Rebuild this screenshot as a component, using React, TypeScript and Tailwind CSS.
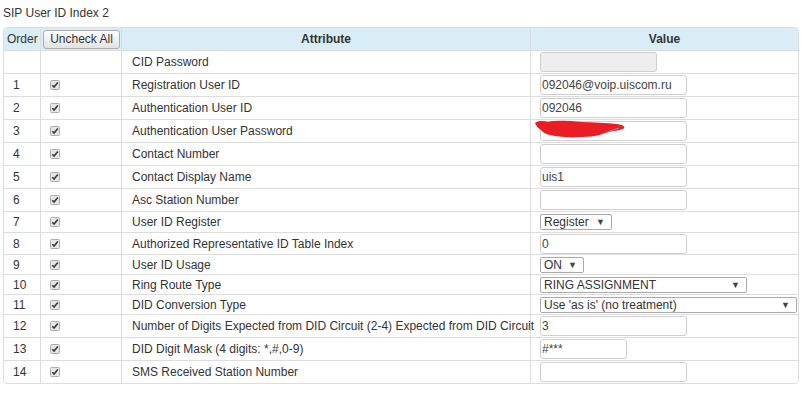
type Value =
  | { kind: "input"; text: string; w: number; disabled?: boolean; redacted?: boolean }
  | { kind: "select"; text: string; w: number };

interface Row {
  order: string;
  checked: boolean;
  label: string;
  h: string;
  value: Value;
}

const rows: Row[] = [
  { order: "", checked: false, label: "CID Password", h: "h-[23px]", value: { kind: "input", text: "", w: 117, disabled: true } },
  { order: "1", checked: true, label: "Registration User ID", h: "h-[23px]", value: { kind: "input", text: "092046@voip.uiscom.ru", w: 147 } },
  { order: "2", checked: true, label: "Authentication User ID", h: "h-[23px]", value: { kind: "input", text: "092046", w: 147 } },
  { order: "3", checked: true, label: "Authentication User Password", h: "h-[23px]", value: { kind: "input", text: "", w: 147, redacted: true } },
  { order: "4", checked: true, label: "Contact Number", h: "h-[23px]", value: { kind: "input", text: "", w: 147 } },
  { order: "5", checked: true, label: "Contact Display Name", h: "h-[23px]", value: { kind: "input", text: "uis1", w: 147 } },
  { order: "6", checked: true, label: "Asc Station Number", h: "h-[23px]", value: { kind: "input", text: "", w: 147 } },
  { order: "7", checked: true, label: "User ID Register", h: "h-[21px]", value: { kind: "select", text: "Register", w: 72 } },
  { order: "8", checked: true, label: "Authorized Representative ID Table Index", h: "h-[22px]", value: { kind: "input", text: "0", w: 147 } },
  { order: "9", checked: true, label: "User ID Usage", h: "h-[20px]", value: { kind: "select", text: "ON", w: 44 } },
  { order: "10", checked: true, label: "Ring Route Type", h: "h-[20px]", value: { kind: "select", text: "RING ASSIGNMENT", w: 207 } },
  { order: "11", checked: true, label: "DID Conversion Type", h: "h-[20px]", value: { kind: "select", text: "Use 'as is' (no treatment)", w: 257 } },
  { order: "12", checked: true, label: "Number of Digits Expected from DID Circuit (2-4) Expected from DID Circuit", h: "h-[23px]", value: { kind: "input", text: "3", w: 147 } },
  { order: "13", checked: true, label: "DID Digit Mask (4 digits: *,#,0-9)", h: "h-[23px]", value: { kind: "input", text: "#***", w: 87 } },
  { order: "14", checked: true, label: "SMS Received Station Number", h: "h-[22px]", value: { kind: "input", text: "", w: 147 } },
];

function CheckBox() {
  return (
    <svg width="10" height="10" viewBox="0 0 10 10">
      <rect x="0.5" y="0.5" width="9" height="9" rx="1" fill="#e6e6e6" stroke="#acacac" />
      <path d="M2.3 5.2 L4.1 7.1 L7.8 2.6" fill="none" stroke="#3a3a3a" strokeWidth="1.6" />
    </svg>
  );
}

// red marker scribble hiding the password
function Scribble() {
  return (
    <svg className="absolute left-[-5px] top-[-1px] h-[18px] w-[92px]" viewBox="0 0 92 18">
      <path
        d="M0 3 C4 0 9 1 13 2 C22 0 34 1 46 2 C58 2 70 3 82 4 C89 5 91 7 88 9 C83 11 76 11 70 13 C63 16 54 17 46 17 C38 18 28 17 20 16 C13 15 8 13 6 10 C3 8 1 6 0 3 Z"
        fill="#ea1c24"
      />
      <path d="M72 12 L84 8" stroke="#6a9bd8" strokeWidth="1" />
    </svg>
  );
}

function ValueCell({ value }: { value: Value }) {
  if (value.kind === "select") {
    return (
      <div
        className="relative flex h-[16px] items-center rounded-[2px] border border-[#a9a9a9] bg-white pl-[3px] text-[12px] leading-none text-[#333]"
        style={{ width: value.w }}
      >
        <span className="whitespace-nowrap">{value.text}</span>
        <span className="absolute right-[6px] top-[3px] text-[9px] leading-none text-[#444]">▼</span>
      </div>
    );
  }
  return (
    <div className="relative" style={{ width: value.w }}>
      <input
        readOnly
        value={value.text}
        className={
          "block h-[20px] w-full rounded-[3px] border border-[#cfcfcf] px-[1px] text-[12px] text-[#444] outline-none " +
          (value.disabled ? "bg-[#eeeeee]" : "bg-white")
        }
        style={{ fontFamily: '"Liberation Sans", Arial, sans-serif' }}
      />
      {value.redacted && <Scribble />}
    </div>
  );
}

export default function App() {
  return (
    <div className="min-h-screen bg-white text-[12px] text-[#333]" style={{ fontFamily: '"Liberation Sans", Arial, sans-serif' }}>
      <div className="h-[27px] pl-[3px] pt-[6px] leading-[14px]">SIP User ID Index 2</div>
      <div className="ml-[3px] w-[796px] overflow-hidden rounded-[4px] border border-[#dddddd]">
        <div className="grid h-[23px] grid-cols-[37px_81px_409px_1fr] border-b border-[#dddddd] bg-[#d9edf7]">
          <div className="flex items-center border-r border-[#dddddd] pl-[3px]">Order</div>
          <div className="flex items-center border-r border-[#dddddd] pl-[2px]">
            <button className="h-[19px] w-[77px] rounded-[3px] border border-[#acacac] bg-gradient-to-b from-[#fdfdfd] to-[#e2e2e2] text-[12px] leading-none text-[#333]">
              Uncheck All
            </button>
          </div>
          <div className="flex items-center justify-center border-r border-[#dddddd] font-bold">Attribute</div>
          <div className="flex items-center justify-center font-bold">Value</div>
        </div>
        {rows.map((r, i) => (
          <div
            key={i}
            className={
              "grid grid-cols-[37px_81px_409px_1fr] " +
              r.h +
              (i < rows.length - 1 ? " border-b border-[#dddddd]" : "")
            }
          >
            <div className="flex items-center border-r border-[#dddddd] pl-[9px]">{r.order}</div>
            <div className="flex items-center border-r border-[#dddddd] pl-[9px]">{r.checked && <CheckBox />}</div>
            <div className="flex items-center whitespace-nowrap border-r border-[#dddddd] pl-[10px]">{r.label}</div>
            <div className="flex items-center pl-[9px]">
              <ValueCell value={r.value} />
            </div>
          </div>
        ))}
      </div>
    </div>
  );
}
